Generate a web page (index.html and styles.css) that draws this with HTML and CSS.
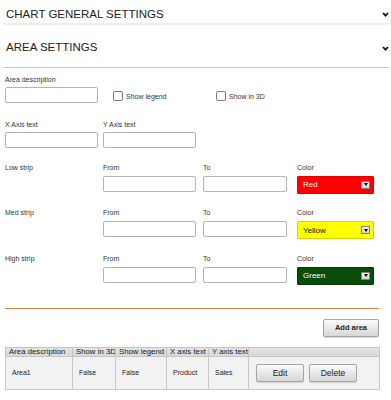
FILE: index.html
```html
<!DOCTYPE html>
<html lang="en">
<head>
    <meta charset="UTF-8">
    <meta name="viewport" content="width=device-width, initial-scale=1.0">
    <title>Area Settings</title>
    <link rel="stylesheet" href="styles.css">
</head>
<body>

<div class="panel-head">
    <span>CHART GENERAL SETTINGS</span>
    <svg class="chevron" width="7" height="5" viewBox="0 0 7 5"><path d="M1 1 L3.5 3.6 L6 1" fill="none" stroke="#111" stroke-width="1.8"/></svg>
</div>
<div class="panel-head panel-head-open">
    <span>AREA SETTINGS</span>
    <svg class="chevron chevron-low" width="7" height="5" viewBox="0 0 7 5"><path d="M1 1 L3.5 3.6 L6 1" fill="none" stroke="#111" stroke-width="1.8"/></svg>
</div>

<div class="area-form">
    <div class="form-row">
        <div class="field">
            <label>Area description</label>
            <input type="text" class="text-input">
        </div>
        <div class="checks">
            <label class="check"><input type="checkbox">Show legend</label>
            <label class="check"><input type="checkbox">Show in 3D</label>
        </div>
    </div>

    <div class="form-row row-axis">
        <div class="field">
            <label>X Axis text</label>
            <input type="text" class="text-input">
        </div>
        <div class="field">
            <label>Y Axis text</label>
            <input type="text" class="text-input">
        </div>
    </div>

    <div class="strip-row">
        <div class="strip-name">Low strip</div>
        <div class="field field-from"><label>From</label><input type="text" class="text-input"></div>
        <div class="field field-to"><label>To</label><input type="text" class="text-input"></div>
        <div class="field field-color"><label>Color</label>
            <div class="color-select color-red"><span>Red</span><span class="select-arrow"></span></div>
        </div>
    </div>

    <div class="strip-row">
        <div class="strip-name">Med strip</div>
        <div class="field field-from"><label>From</label><input type="text" class="text-input"></div>
        <div class="field field-to"><label>To</label><input type="text" class="text-input"></div>
        <div class="field field-color"><label>Color</label>
            <div class="color-select color-yellow"><span>Yellow</span><span class="select-arrow"></span></div>
        </div>
    </div>

    <div class="strip-row">
        <div class="strip-name">High strip</div>
        <div class="field field-from"><label>From</label><input type="text" class="text-input"></div>
        <div class="field field-to"><label>To</label><input type="text" class="text-input"></div>
        <div class="field field-color"><label>Color</label>
            <div class="color-select color-green"><span>Green</span><span class="select-arrow"></span></div>
        </div>
    </div>

    <hr class="divider">

    <div class="actions">
        <button class="btn btn-add">Add area</button>
    </div>

    <table class="area-table">
        <colgroup>
            <col class="col-desc">
            <col class="col-3d">
            <col class="col-legend">
            <col class="col-x">
            <col class="col-y">
            <col class="col-actions">
        </colgroup>
        <tr>
            <th>Area description</th>
            <th>Show in 3D</th>
            <th>Show legend</th>
            <th>X axis text</th>
            <th>Y axis text</th>
            <th></th>
        </tr>
        <tr>
            <td>Area1</td>
            <td>False</td>
            <td>False</td>
            <td>Product</td>
            <td>Sales</td>
            <td class="cell-actions">
                <div class="row-actions">
                    <button class="btn btn-row">Edit</button>
                    <button class="btn btn-row">Delete</button>
                </div>
            </td>
        </tr>
    </table>
</div>

</body>
</html>
```

FILE: styles.css
```css
body {
    margin: 0;
    padding: 0;
    font-family: "Liberation Sans", Arial, sans-serif;
    color: #333;
    background: #fff;
}

.panel-head {
    display: flex;
    justify-content: space-between;
    align-items: center;
    margin: 0 2px 0 3px;
    padding: 7px 0 2px 3px;
    font-size: 11.5px;
    line-height: 14px;
    color: #222;
    border-bottom: 2px solid #ededed;
}

.panel-head-open {
    padding: 15px 0 13px 3px;
    border-bottom: 1px solid #c8c8c8;
}

.chevron {
    display: block;
}

.chevron-low {
    margin-top: 3px;
}

.area-form {
    padding: 7px 12px 0 5px;
}

.form-row {
    display: flex;
    align-items: flex-end;
}

.row-axis {
    margin-top: 17px;
    gap: 5px;
}

.field label {
    display: block;
    font-size: 7px;
    line-height: 9px;
    margin-bottom: 3px;
}

.text-input {
    display: block;
    box-sizing: border-box;
    width: 93px;
    height: 16px;
    margin: 0;
    padding: 0 3px;
    border: 1px solid #b4b4b4;
    border-radius: 2px;
    background: #fff;
}

.checks {
    display: flex;
    margin-left: 15px;
}

.check {
    display: flex;
    align-items: center;
    gap: 3px;
    width: 103px;
    height: 16px;
    padding-top: 2px;
    box-sizing: border-box;
    font-size: 7px;
}

.check input {
    appearance: none;
    width: 10px;
    height: 10px;
    margin: 0;
    border: 1px solid #7a7a7a;
    border-radius: 2px;
    background: #fff;
}

/* strip rows */
.strip-row {
    display: flex;
    margin-top: 14.5px;
}

.strip-name {
    width: 98px;
    font-size: 7px;
    line-height: 9px;
}

.strip-row .field label {
    margin-bottom: 4px;
}

.field-to {
    margin-left: 7px;
}

.field-to .text-input {
    width: 84px;
}

.field-color {
    margin-left: 10px;
}

.color-select {
    display: flex;
    align-items: center;
    justify-content: space-between;
    box-sizing: border-box;
    width: 77px;
    height: 18px;
    padding: 0 3px 0 5px;
    font-size: 8px;
    border: 1px solid;
    border-radius: 1px;
}

.color-red {
    background: #ff0000;
    border-color: #e60000;
    color: #fff;
}

.color-yellow {
    background: #ffff00;
    border-color: #d4d400;
    color: #111;
}

.color-green {
    background: #0a4d0a;
    border-color: #063806;
    color: #fff;
}

.select-arrow {
    display: flex;
    align-items: center;
    justify-content: center;
    box-sizing: border-box;
    width: 9px;
    height: 8px;
    border: 1px solid #808080;
    background: linear-gradient(#f6f6f6, #d2d2d2);
}

.select-arrow::after {
    content: '';
    border-left: 2.5px solid transparent;
    border-right: 2.5px solid transparent;
    border-top: 3px solid #000;
}

.divider {
    height: 0;
    margin: 23px 0 0;
    border: 0;
    border-top: 1px solid #d9834f;
}

.actions {
    display: flex;
    justify-content: flex-end;
    margin-top: 10px;
}

.btn {
    box-sizing: border-box;
    height: 18px;
    padding: 0;
    border: 1px solid #a6a6a6;
    border-radius: 2px;
    background: linear-gradient(#fbfbfb, #d6d6d6);
    box-shadow: 0 1px 1px rgba(0, 0, 0, 0.15);
    font-family: "Liberation Sans", Arial, sans-serif;
    color: #222;
    cursor: pointer;
}

.btn-add {
    width: 56px;
    font-size: 7.5px;
    font-weight: bold;
}

/* areas table */
.area-table {
    width: 100%;
    margin-top: 10px;
    border-collapse: collapse;
    table-layout: fixed;
    font-size: 7px;
}

.col-desc { width: 67px; }
.col-3d { width: 43px; }
.col-legend { width: 51px; }
.col-x { width: 42px; }
.col-y { width: 40px; }
.col-actions { width: 131px; }

.area-table th {
    height: 8px;
    padding: 0 3px;
    line-height: 8px;
    font-size: 7.8px;
    font-weight: normal;
    text-align: left;
    white-space: nowrap;
    overflow: hidden;
    color: #222;
    background: linear-gradient(#e6e6e6, #d6d6d6);
    border: 1px solid #c4c4c4;
}

.area-table td {
    height: 32px;
    padding: 0 6px;
    color: #222;
    background: #f2f2f2;
    border: 1px solid #c8c8c8;
}

.area-table td.cell-actions {
    padding: 0 7px;
}

.row-actions {
    display: flex;
    gap: 5px;
}

.btn-row {
    width: 48px;
    font-size: 8.5px;
}
```
